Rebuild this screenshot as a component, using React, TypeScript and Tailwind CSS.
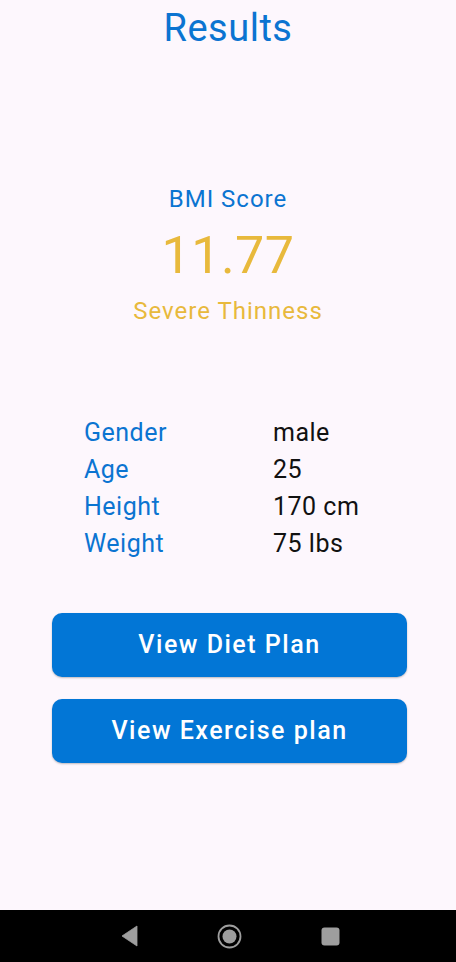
import React from "react";

const rows = [
  { label: "Gender", value: "male" },
  { label: "Age", value: "25" },
  { label: "Height", value: "170 cm" },
  { label: "Weight", value: "75 lbs" },
];

export default function App() {
  return (
    <div
      className="w-[456px] h-[962px] flex flex-col bg-[#fdf7fd]"
      style={{ fontFamily: "Roboto, 'Noto Sans', sans-serif" }}
    >
      <div className="flex-1 flex flex-col items-center">
        {/* Title */}
        <h1 className="mt-[6px] text-[38px] leading-[44px] text-[#0b74d1] tracking-[0.5px]">
          Results
        </h1>

        {/* Score */}
        <div className="mt-[134px] flex flex-col items-center">
          <p className="text-[24px] leading-[30px] text-[#0b74d1] tracking-[1px]">
            BMI Score
          </p>
          <p className="mt-[14px] text-[52px] leading-[56px] text-[#e8b93c] tracking-[0.5px]">
            11.77
          </p>
          <p className="mt-[12px] text-[24px] leading-[30px] text-[#e8b93c] tracking-[1px]">
            Severe Thinness
          </p>
        </div>

        {/* Details */}
        <div className="mt-[88px] w-full pl-[84px] flex flex-col">
          {rows.map((r) => (
            <div key={r.label} className="flex h-[37px] items-center">
              <span className="w-[189px] text-[25px] text-[#0b74d1] tracking-[0.5px]">
                {r.label}
              </span>
              <span className="text-[25px] text-[#111111] tracking-[0.5px]">
                {r.value}
              </span>
            </div>
          ))}
        </div>

        {/* Buttons */}
        <div className="mt-[51px] w-full pl-[52px] pr-[49px] flex flex-col gap-[22px]">
          <button className="h-[64px] w-full rounded-[10px] bg-[#0276d6] text-white text-[25px] font-['Roboto_Medium',Roboto,sans-serif] font-normal tracking-[1.5px] shadow-[0_1px_2px_rgba(0,0,0,0.25)]">
            View Diet Plan
          </button>
          <button className="h-[64px] w-full rounded-[10px] bg-[#0276d6] text-white text-[25px] font-['Roboto_Medium',Roboto,sans-serif] font-normal tracking-[1.5px] shadow-[0_1px_2px_rgba(0,0,0,0.25)]">
            View Exercise plan
          </button>
        </div>
      </div>

      {/* Android nav bar */}
      <div className="h-[52px] bg-black flex items-center pl-[121px]">
        <svg width="17" height="22" viewBox="0 0 17 22">
          <path d="M16 1 L1 11 L16 21 Z" fill="#9e9e9e" strokeLinejoin="round" stroke="#9e9e9e" strokeWidth="0.8" />
        </svg>
        <svg className="ml-[79px]" width="25" height="25" viewBox="0 0 25 25">
          <circle cx="12.5" cy="12.5" r="11" fill="none" stroke="#9e9e9e" strokeWidth="1.8" />
          <circle cx="12.5" cy="12.5" r="7" fill="#9e9e9e" />
        </svg>
        <svg className="ml-[79px]" width="19" height="19" viewBox="0 0 19 19">
          <rect x="0.5" y="0.5" width="18" height="18" rx="3" fill="#9e9e9e" />
        </svg>
      </div>
    </div>
  );
}
